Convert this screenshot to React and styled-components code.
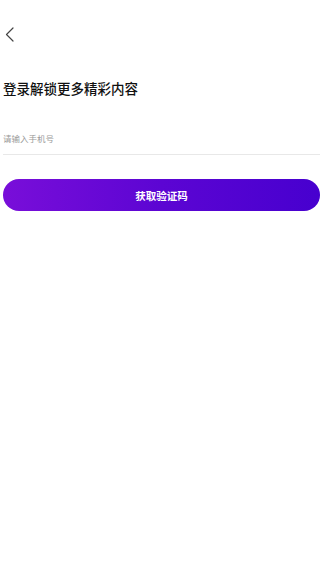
import React from "react";
import styled, { createGlobalStyle } from "styled-components";

const Global = createGlobalStyle`
  html, body { margin: 0; padding: 0; background: #fff; }
  body { font-family: "Noto Sans CJK SC", "Noto Sans", sans-serif; }
  * { box-sizing: border-box; }
`;

const Page = styled.div`
  width: 320px;
  min-height: 570px;
  background: #fff;
  display: flex;
  flex-direction: column;
  padding-left: 3px;
`;

const TopBar = styled.div`
  height: 81px;
  padding-top: 27px;
  padding-left: 2px;
`;

const BackButton = styled.button`
  display: block;
  border: 0;
  background: transparent;
  padding: 0;
  width: 9px;
  height: 15px;
  cursor: pointer;
`;

const Title = styled.h1`
  margin: 0;
  font-size: 13.5px;
  line-height: 15px;
  font-weight: 500;
  color: #111;
`;

const Field = styled.div`
  margin-top: 30px;
  height: 29px;
  padding-bottom: 4px;
  border-bottom: 1px solid #e8e8e8;
  display: flex;
  align-items: center;
`;

const Input = styled.input`
  flex: 1;
  border: 0;
  outline: none;
  background: transparent;
  padding: 0;
  font-family: inherit;
  font-size: 8.5px;
  color: #333;
  &::placeholder { color: #9a9a9a; }
`;

const SubmitButton = styled.button`
  margin-top: 24px;
  height: 32px;
  width: 100%;
  border: 0;
  border-radius: 16px;
  background: linear-gradient(90deg, #790ed9 0%, #5c05d3 50%, #4700cf 100%);
  color: #fff;
  font-family: inherit;
  font-size: 10.5px;
  font-weight: 700;
  cursor: pointer;
`;

export default function App() {
  return (
    <>
      <Global />
      <Page>
        <TopBar>
          <BackButton aria-label="back">
            <svg width="9" height="15" viewBox="0 0 9 15">
              <polyline points="8,1 1.5,7.5 8,14" fill="none" stroke="#444" strokeWidth="1.2" strokeLinecap="round" strokeLinejoin="round" />
            </svg>
          </BackButton>
        </TopBar>
        <Title>登录解锁更多精彩内容</Title>
        <Field>
          <Input placeholder="请输入手机号" />
        </Field>
        <SubmitButton>获取验证码</SubmitButton>
      </Page>
    </>
  );
}
